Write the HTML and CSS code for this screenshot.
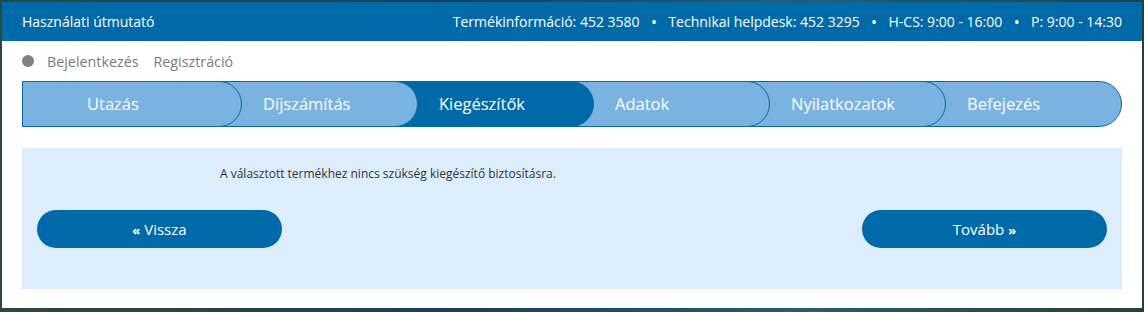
FILE: index.html
```html
<!DOCTYPE html>
<html>
  <head>
    <title>Kiegészítők</title>
    <link rel="stylesheet" href="styles.css">
  </head>
  <body>
    <div class="card">
      <!-- top bar -->
      <div class="topbar">
        <a class="guide">Használati útmutató</a>
        <div class="contacts">
          <span>Termékinformáció: 452 3580</span>
          <span class="sep">•</span>
          <span>Technikai helpdesk: 452 3295</span>
          <span class="sep">•</span>
          <span>H-CS: 9:00 - 16:00</span>
          <span class="sep">•</span>
          <span>P: 9:00 - 14:30</span>
        </div>
      </div>

      <div class="user">
        <span class="dot"></span>
        <a>Bejelentkezés</a>
        <a>Regisztráció</a>
      </div>

      <!-- wizard steps -->
      <div class="steps">
        <div class="step">Utazás</div>
        <div class="step">Díjszámítás</div>
        <div class="step active">Kiegészítők</div>
        <div class="step">Adatok</div>
        <div class="step">Nyilatkozatok</div>
        <div class="step">Befejezés</div>
      </div>

      <div class="panel">
        <p class="message">A választott termékhez nincs szükség kiegészítő biztosításra.</p>
        <div class="actions">
          <button class="btn"><span class="arr">«</span> Vissza</button>
          <button class="btn">Tovább <span class="arr">»</span></button>
        </div>
      </div>
    </div>
  </body>
</html>
```

FILE: styles.css
```css
body {
  margin: 0;
  padding: 2px 2px 0;
  height: 312px;
  box-sizing: border-box;
  background: linear-gradient(90deg, #2c4a3a 0%, #1d3f58 40%, #2f5a6a 70%, #24423a 100%);
  font-family: "Open Sans", "Liberation Sans", sans-serif;
}
.card {
  background: #fff;
  padding-bottom: 19px;
}

/* top bar */
.topbar {
  display: flex;
  align-items: center;
  justify-content: space-between;
  height: 39px;
  padding: 0 20px;
  background: #0069a8;
  color: #fff;
  font-size: 14px;
}
.topbar .sep {
  margin: 0 8.5px;
  font-size: 12px;
  font-weight: bold;
}

.user {
  display: flex;
  align-items: center;
  height: 40px;
  padding: 0 20px;
  font-size: 14.3px;
  color: #7b7b7b;
}
.user .dot {
  width: 12px;
  height: 12px;
  border-radius: 50%;
  background: #808080;
  margin-right: 13px;
}
.user a {
  margin-right: 15px;
}

/* steps */
.steps {
  display: flex;
  margin: 0 20px;
}
.step {
  flex: 1 1 0;
  position: relative;
  height: 46px;
  box-sizing: border-box;
  margin-left: -44px;
  padding-left: 64px;
  line-height: 44px;
  background: #7ab2e0;
  border: 1px solid #0b68a7;
  border-radius: 0 23px 23px 0;
  color: #fff;
  font-size: 16.5px;
}
.step:first-child { margin-left: 0; }
.step:nth-child(1) { z-index: 6; }
.step:nth-child(2) { z-index: 5; }
.step:nth-child(3) { z-index: 4; }
.step:nth-child(4) { z-index: 3; }
.step:nth-child(5) { z-index: 2; }
.step:nth-child(6) { z-index: 1; }
.step.active {
  background: #0069a8;
  border-color: #0069a8;
}

/* content panel */
.panel {
  margin: 21px 20px 0;
  padding: 18px 15px 41px;
  background: #ddedfc;
}
.message {
  margin: 0 0 28px;
  padding-left: 183px;
  font-size: 12px;
  line-height: 16px;
  color: #333;
}
.actions {
  display: flex;
  justify-content: space-between;
}
.btn {
  width: 245px;
  height: 38px;
  border: none;
  border-radius: 19px;
  background: #0069a8;
  color: #fff;
  font-family: inherit;
  font-size: 15px;
  cursor: pointer;
}
.btn .arr {
  font-size: 13px;
  font-weight: bold;
}
```
